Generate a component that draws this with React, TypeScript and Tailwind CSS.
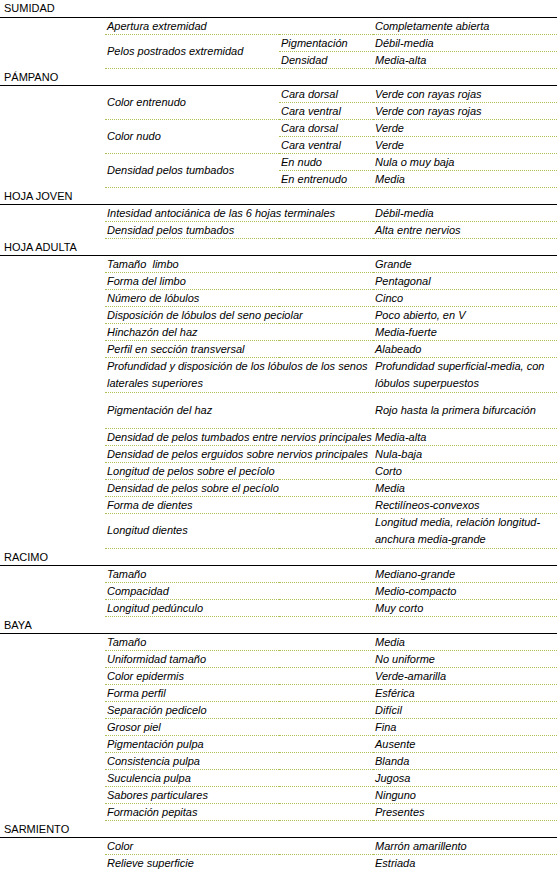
type Row =
  | { label: React.ReactNode; value: React.ReactNode; h?: string }
  | { label: React.ReactNode; subs: [string, string][] }

type Section = { title: string; rows: Row[] }

const sections: Section[] = [
  {
    title: "SUMIDAD",
    rows: [
      { label: "Apertura extremidad", value: "Completamente abierta" },
      {
        label: "Pelos postrados extremidad",
        subs: [
          ["Pigmentación", "Débil-media"],
          ["Densidad", "Media-alta"],
        ],
      },
    ],
  },
  {
    title: "PÁMPANO",
    rows: [
      {
        label: "Color entrenudo",
        subs: [
          ["Cara dorsal", "Verde con rayas rojas"],
          ["Cara ventral", "Verde con rayas rojas"],
        ],
      },
      {
        label: "Color nudo",
        subs: [
          ["Cara dorsal", "Verde"],
          ["Cara ventral", "Verde"],
        ],
      },
      {
        label: "Densidad pelos tumbados",
        subs: [
          ["En nudo", "Nula o muy baja"],
          ["En entrenudo", "Media"],
        ],
      },
    ],
  },
  {
    title: "HOJA JOVEN",
    rows: [
      { label: "Intesidad antociánica de las 6 hojas terminales", value: "Débil-media" },
      { label: "Densidad pelos tumbados", value: "Alta entre nervios" },
    ],
  },
  {
    title: "HOJA ADULTA",
    rows: [
      { label: "Tamaño  limbo", value: "Grande" },
      { label: "Forma del limbo", value: "Pentagonal" },
      { label: "Número de lóbulos", value: "Cinco" },
      { label: "Disposición de lóbulos del seno peciolar", value: "Poco abierto, en V" },
      { label: "Hinchazón del haz", value: "Media-fuerte" },
      { label: "Perfil en sección transversal", value: "Alabeado" },
      {
        label: (
          <>
            Profundidad y disposición de los lóbulos de los senos
            <br />
            laterales superiores
          </>
        ),
        value: (
          <>
            Profundidad superficial-media, con
            <br />
            lóbulos superpuestos
          </>
        ),
        h: "h-[35px] leading-[17px]",
      },
      { label: "Pigmentación del haz", value: "Rojo hasta la primera bifurcación", h: "h-[36px]" },
      { label: "Densidad de pelos tumbados entre nervios principales", value: "Media-alta" },
      { label: "Densidad de pelos erguidos sobre nervios principales", value: "Nula-baja" },
      { label: "Longitud de pelos sobre el pecíolo", value: "Corto" },
      { label: "Densidad de pelos sobre el pecíolo", value: "Media" },
      { label: "Forma de dientes", value: "Rectilíneos-convexos" },
      {
        label: "Longitud dientes",
        value: (
          <>
            Longitud media, relación longitud-
            <br />
            anchura media-grande
          </>
        ),
        h: "h-[35px] leading-[17px]",
      },
    ],
  },
  {
    title: "RACIMO",
    rows: [
      { label: "Tamaño", value: "Mediano-grande" },
      { label: "Compacidad", value: "Medio-compacto" },
      { label: "Longitud pedúnculo", value: "Muy corto" },
    ],
  },
  {
    title: "BAYA",
    rows: [
      { label: "Tamaño", value: "Media" },
      { label: "Uniformidad tamaño", value: "No uniforme" },
      { label: "Color epidermis", value: "Verde-amarilla" },
      { label: "Forma perfil", value: "Esférica" },
      { label: "Separación pedicelo", value: "Difícil" },
      { label: "Grosor piel", value: "Fina" },
      { label: "Pigmentación pulpa", value: "Ausente" },
      { label: "Consistencia pulpa", value: "Blanda" },
      { label: "Suculencia pulpa", value: "Jugosa" },
      { label: "Sabores particulares", value: "Ninguno" },
      { label: "Formación pepitas", value: "Presentes" },
    ],
  },
  {
    title: "SARMIENTO",
    rows: [
      { label: "Color", value: "Marrón amarillento" },
      { label: "Relieve superficie", value: "Estriada" },
    ],
  },
]

const cell = "border-b border-dotted border-[#b0bf55] px-[2px] align-middle italic whitespace-pre"

export default function App() {
  return (
    <div className="w-[557px] bg-white text-black text-[11px] leading-[16px]" style={{ fontFamily: '"Liberation Sans", Arial, sans-serif' }}>
      <table className="w-full table-fixed border-collapse">
        <colgroup>
          <col className="w-[105px]" />
          <col className="w-[174px]" />
          <col className="w-[94px]" />
          <col />
        </colgroup>
        <tbody>
          {sections.map((s) => (
            <SectionRows key={s.title} section={s} />
          ))}
        </tbody>
      </table>
    </div>
  )
}

function SectionRows({ section }: { section: Section }) {
  return (
    <>
      <tr className="h-[17px]">
        <td colSpan={4} className="border-b border-black pl-[4px] align-middle">
          {section.title}
        </td>
      </tr>
      {section.rows.map((r, i) =>
        "subs" in r ? (
          r.subs.map(([sub, val], j) => (
            <tr key={`${i}-${j}`} className="h-[17px]">
              {j === 0 && (
                <>
                  <td rowSpan={r.subs.length} />
                  <td rowSpan={r.subs.length} className={cell}>
                    {r.label}
                  </td>
                </>
              )}
              <td className={cell}>{sub}</td>
              <td className={cell}>{val}</td>
            </tr>
          ))
        ) : (
          <tr key={i} className={r.h ?? "h-[17px]"}>
            <td />
            <td colSpan={2} className={cell}>
              {r.label}
            </td>
            <td className={cell}>{r.value}</td>
          </tr>
        ),
      )}
    </>
  )
}
